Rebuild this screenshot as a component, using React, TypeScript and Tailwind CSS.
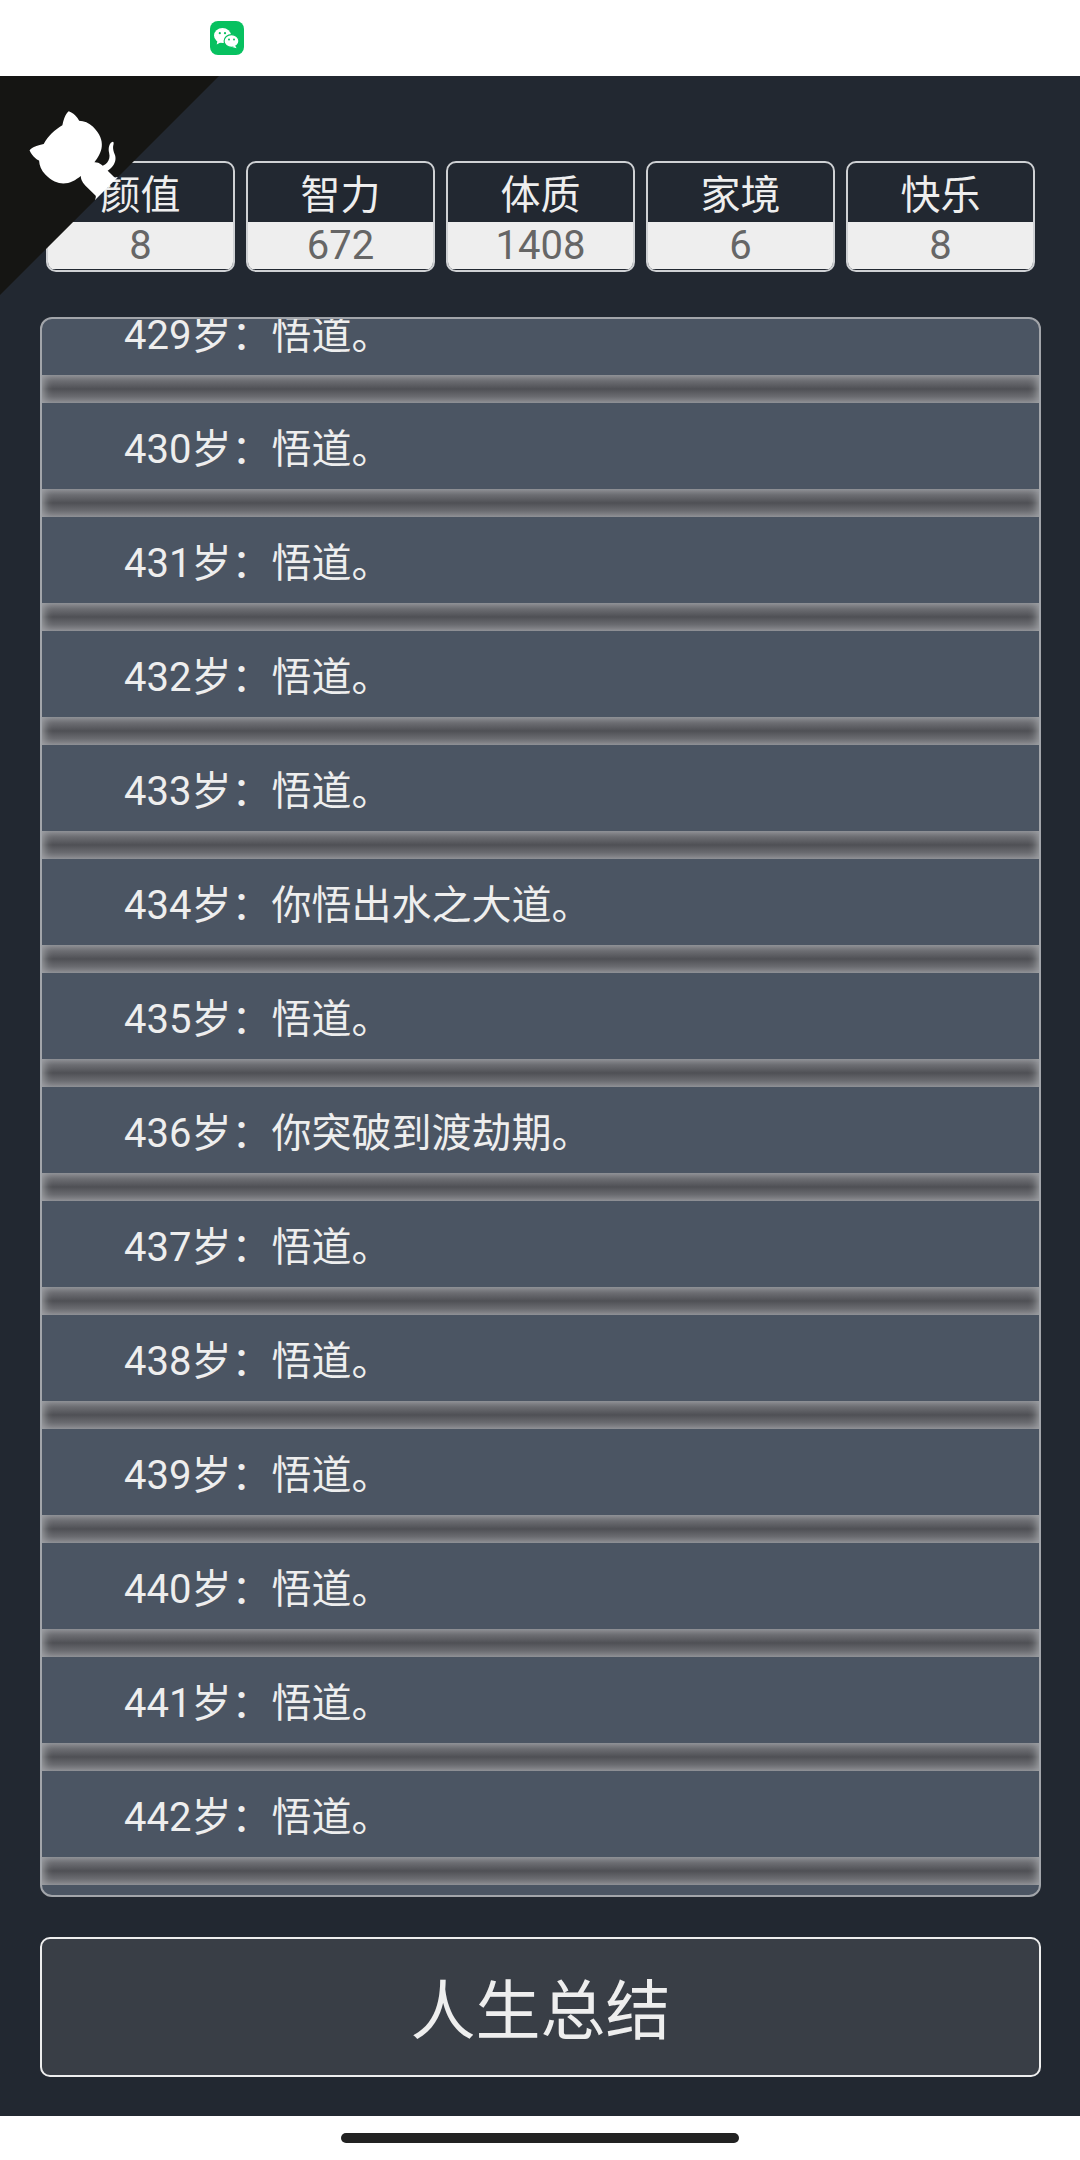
import React from "react";

const stats = [
    { label: "颜值", value: "8" },
    { label: "智力", value: "672" },
    { label: "体质", value: "1408" },
    { label: "家境", value: "6" },
    { label: "快乐", value: "8" },
];

const events: Record<number, string> = {
    434: "你悟出水之大道。",
    436: "你突破到渡劫期。",
};

const ages = Array.from({ length: 14 }, (_, i) => 429 + i);

function GithubCorner() {
    return (
        <svg
            viewBox="0 0 250 250"
            className="absolute left-0 top-[76px] w-[219px] h-[219px] -scale-x-100"
        >
            <path d="M0,0 L115,115 L130,115 L142,142 L250,250 L250,0 Z" fill="#151513" />
            <path
                d="M128.3,109.0 C113.8,99.7 119.0,89.6 119.0,89.6 C122.0,82.7 120.5,78.6 120.5,78.6 C119.2,72.0 123.4,76.3 123.4,76.3 C127.3,80.9 125.5,87.3 125.5,87.3 C122.9,97.6 130.6,101.9 134.4,103.2"
                fill="#fff"
            />
            <path
                d="M115.0,115.0 C114.9,115.1 118.7,116.5 119.8,115.4 L133.7,101.6 C136.9,99.2 139.9,98.4 142.2,98.6 C133.8,88.0 127.5,74.4 143.8,58.0 C148.5,53.4 154.0,51.2 159.7,51.0 C160.3,49.4 163.2,43.6 171.4,40.1 C171.4,40.1 176.1,42.5 178.8,56.2 C183.1,58.6 187.2,61.8 190.9,65.4 C194.5,69.0 197.7,73.2 200.1,77.6 C213.8,80.2 216.3,84.9 216.3,84.9 C212.7,93.1 206.9,96.0 205.4,96.6 C205.1,102.4 203.0,107.8 198.3,112.5 C181.9,128.9 168.3,122.5 157.7,114.1 C157.9,116.9 156.7,120.9 152.7,124.9 L141.0,136.5 C139.8,137.7 141.6,141.9 141.8,141.8 Z"
                fill="#fff"
            />
        </svg>
    );
}

function WechatIcon() {
    return (
        <svg viewBox="0 0 34 34" className="w-[34px] h-[34px]">
            <rect width="34" height="34" rx="8" fill="#07c160" />
            <ellipse cx="12.5" cy="14.5" rx="8.5" ry="7.5" fill="#fff" />
            <path d="M7.5 19.5l-.8 4 4.6-2.4z" fill="#fff" />
            <circle cx="9.8" cy="12.2" r="1.1" fill="#07c160" />
            <circle cx="15" cy="12.2" r="1.1" fill="#07c160" />
            <ellipse cx="21.5" cy="20" rx="7.4" ry="6.4" fill="#fff" stroke="#07c160" strokeWidth="1.1" />
            <path d="M25 24.5l1.6 2.8-4.4-1.4z" fill="#fff" />
            <circle cx="19" cy="18.6" r="1" fill="#07c160" />
            <circle cx="24" cy="18.6" r="1" fill="#07c160" />
        </svg>
    );
}

export default function App() {
    return (
        <div className="relative w-[1080px] h-[2160px] bg-white font-['Roboto','Noto_Sans_CJK_SC',sans-serif] overflow-hidden">
            {/* Status bar */}
            <div className="h-[76px] pl-[210px] pt-[21px]">
                <WechatIcon />
            </div>

            {/* Page */}
            <div className="h-[2040px] bg-[#222831] pl-[40px] pr-[39px]">
                {/* Stats */}
                <div className="flex gap-[11px] pl-[6px] pt-[85px]">
                    {stats.map((s) => (
                        <div
                            key={s.label}
                            className="w-[189px] h-[111px] border-2 border-[#cfd1d4] rounded-[10px] overflow-hidden flex flex-col"
                        >
                            <div className="h-[59px] text-center text-[40px] leading-[65px] text-[#eeeeee]">
                                {s.label}
                            </div>
                            <div className="h-[47px] bg-[#eeeeee] text-center text-[40px] leading-[48px] text-[#666666]">
                                {s.value}
                            </div>
                        </div>
                    ))}
                </div>

                {/* Life trajectory */}
                <div className="mt-[45px] h-[1580px] border-2 border-[#a2a5aa] rounded-[12px] bg-[#4b5563] overflow-hidden">
                    <div className="-mt-[30px]">
                        {ages.map((age) => (
                            <div key={age}>
                                <div className="h-[86px] pl-[82px] text-[40px] leading-[93px] text-[#eeeeee]">
                                    {age}岁：{events[age] ?? "悟道。"}
                                </div>
                                <div className="h-[28px] bg-[linear-gradient(to_bottom,#8d8f94_0%,#6b6c71_22%,#4f5055_50%,#6b6c71_78%,#8d8f94_100%)] shadow-[inset_8px_0_8px_-6px_#a0a2a6,inset_-8px_0_8px_-6px_#a0a2a6]"></div>
                            </div>
                        ))}
                    </div>
                </div>

                {/* Summary button */}
                <div className="mt-[40px] h-[140px] border-2 border-[#eeeeee] rounded-[10px] bg-[#393e46] text-center text-[65px] leading-[147px] text-[#eeeeee]">
                    人生总结
                </div>
            </div>

            {/* Home indicator */}
            <div className="flex justify-center pt-[17px]">
                <div className="w-[398px] h-[10px] rounded-full bg-[#222222]"></div>
            </div>

            <GithubCorner />
        </div>
    );
}
